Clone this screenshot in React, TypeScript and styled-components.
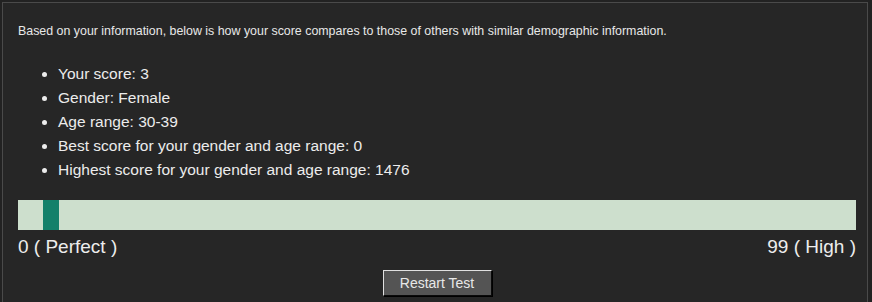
import React from 'react';
import styled, { createGlobalStyle } from 'styled-components';

const GlobalStyle = createGlobalStyle`
  html, body {
    margin: 0;
    padding: 0;
    background: #222222;
  }
  body {
    font-family: "Liberation Sans", Arial, sans-serif;
  }
`;

const Frame = styled.div`
  margin: 2px 4px 0 2px;
  height: 300px;
  box-sizing: border-box;
  border: 1px solid #4a4a4a;
  border-bottom: none;
  background: #262626;
  padding: 18px 11px 0 15px;
  color: #e6e6e6;
`;

const Intro = styled.p`
  margin: 0;
  font-size: 12.4px;
  line-height: 20px;
  color: #e8e8e8;
`;

const List = styled.ul`
  margin: 21px 0 0;
  padding-left: 40px;
  font-size: 15.5px;
  line-height: 24px;
  color: #ececec;
`;

const Item = styled.li``;

const Bar = styled.div`
  margin-top: 18px;
  height: 30px;
  background: #cddfcd;
  position: relative;
`;

const Marker = styled.div`
  position: absolute;
  top: 0;
  bottom: 0;
  width: 16px;
  background: #13806a;
`;

const Scale = styled.div`
  display: flex;
  justify-content: space-between;
  font-size: 19px;
  line-height: 22px;
  margin-top: 6px;
  color: #ededed;
`;

const Actions = styled.div`
  display: flex;
  justify-content: center;
  margin-top: 12px;
`;

const Button = styled.button`
  font-family: "Liberation Sans", Arial, sans-serif;
  font-size: 14px;
  width: 109px;
  height: 26px;
  background: #545454;
  color: #e8e8e8;
  border: 1px solid;
  border-color: #e0e0e0 #0a0a0a #0a0a0a #e0e0e0;
  box-shadow: 1px 1px 0 #000;
  padding: 0;
  cursor: pointer;
`;

const items = [
  'Your score: 3',
  'Gender: Female',
  'Age range: 30-39',
  'Best score for your gender and age range: 0',
  'Highest score for your gender and age range: 1476',
];

export default function App() {
  const position = 3;
  return (
    <>
      <GlobalStyle />
      <Frame>
        <Intro>
          Based on your information, below is how your score compares to those of others with similar demographic information.
        </Intro>
        <List>
          {items.map((t) => (
            <Item key={t}>{t}</Item>
          ))}
        </List>
        <Bar>
          <Marker style={{ left: `${position * 8.3}px` }} />
        </Bar>
        <Scale>
          <span>0 ( Perfect )</span>
          <span>99 ( High )</span>
        </Scale>
        <Actions>
          <Button>Restart Test</Button>
        </Actions>
      </Frame>
    </>
  );
}
